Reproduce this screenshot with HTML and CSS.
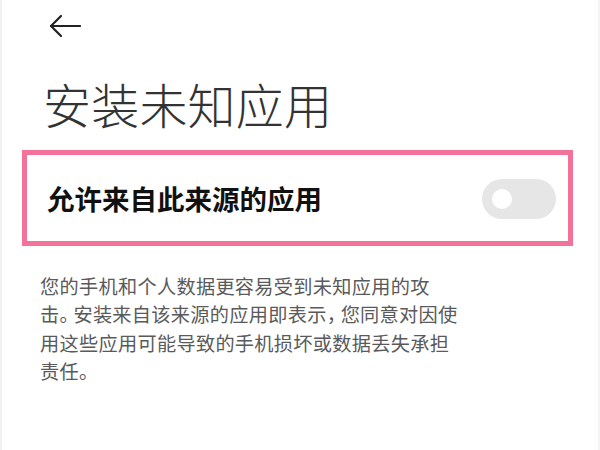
FILE: index.html
```html
<!DOCTYPE html>
<html lang="zh-CN">
<head>
<meta charset="utf-8">
<title>安装未知应用</title>
<link rel="stylesheet" href="styles.css">
</head>
<body>
<div class="page">
  <div class="header">
    <svg class="back" width="32" height="24" viewBox="0 0 32 24" fill="none" stroke="#222" stroke-width="2.2" stroke-linecap="round" stroke-linejoin="round">
      <path d="M31 12H2"/>
      <path d="M12 2L2 12L12 22"/>
    </svg>
  </div>
  <h1 class="title">安装未知应用</h1>
  <div class="highlight">
    <div class="row">
      <span class="row-label">允许来自此来源的应用</span>
      <span class="switch"><span class="knob"></span></span>
    </div>
  </div>
  <p class="desc">您的手机和个人数据更容易受到未知应用的攻<br>击<span class="punct">。</span>安装来自该来源的应用即表示<span class="punct">，</span>您同意对因使<br>用这些应用可能导致的手机损坏或数据丢失承担<br>责任<span class="punct">。</span></p>
</div>
</body>
</html>
```
FILE: styles.css
```css
html, body {
  margin: 0;
  padding: 0;
  background: #fff;
}
body {
  width: 600px;
  height: 450px;
  overflow: hidden;
  font-family: "Noto Sans CJK SC", "Noto Sans", sans-serif;
}
.page {
  height: 450px;
  box-sizing: border-box;
  border-left: 2px solid #f0f0f0;
  border-right: 2px solid #f4f4f4;
}
.header {
  height: 64px;
  padding-left: 47px;
  padding-top: 14px;
  box-sizing: border-box;
}
.back {
  display: block;
}
.title {
  margin: 0;
  padding-left: 41px;
  font-size: 48px;
  font-weight: 300;
  line-height: 78px;
  color: #333;
  letter-spacing: 0.2px;
}
.highlight {
  margin: 8px 25px 0 20px;
  height: 96px;
  box-sizing: border-box;
  border: 5px solid #f2729a;
}
.row {
  height: 100%;
  display: flex;
  align-items: center;
  justify-content: space-between;
  padding: 0 12px 0 20px;
}
.row-label {
  font-size: 27.5px;
  font-weight: 700;
  color: #111;
  line-height: 1;
  padding-top: 2px;
}
.switch {
  position: relative;
  width: 74px;
  height: 40px;
  border-radius: 20px;
  background: #e6e6e6;
  margin-top: 2px;
}
.knob {
  position: absolute;
  left: 10px;
  top: 10px;
  width: 20px;
  height: 20px;
  border-radius: 50%;
  background: #fff;
}
.desc {
  margin: 26px 0 0 0;
  padding-left: 38px;
  font-size: 19.2px;
  letter-spacing: 0.3px;
  line-height: 28.3px;
  color: #5a5a5a;
}
.punct {
  font-feature-settings: "halt" 1;
  margin-right: 4px;
}
```
